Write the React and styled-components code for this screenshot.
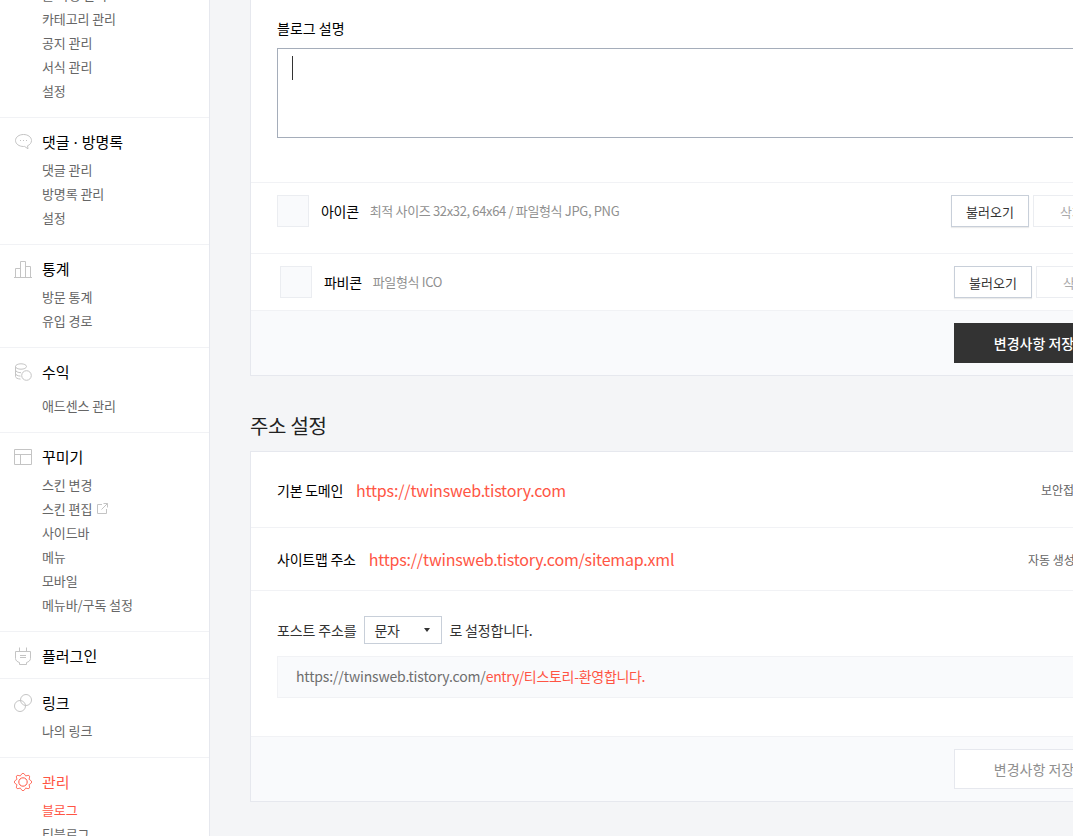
import React from 'react';
import styled, { createGlobalStyle } from 'styled-components';

const GlobalStyle = createGlobalStyle`
  html, body {
    margin: 0;
    height: 100%;
    overflow: hidden;
    background: #f4f5f7;
  }
  body {
    font-family: "Noto Sans CJK KR", "Noto Sans", sans-serif;
    color: #333;
  }
  * { box-sizing: border-box; }
`;

const Shell = styled.div`
  display: flex;
  align-items: flex-start;
  width: 1073px;
  height: 836px;
  overflow: hidden;
`;

const Sidebar = styled.nav`
  flex: 0 0 210px;
  height: 836px;
  overflow: hidden;
  background: #fff;
  border-right: 1px solid #e6e8ee;
`;

const Section = styled.div`
  padding: 11px 0 ${p => (p.$noItems ? 11 : 15)}px;
  border-bottom: 1px solid #f1f2f5;
  &:first-child { margin-top: -33px; }
`;

const SectionTitle = styled.div`
  display: flex;
  align-items: center;
  height: 24px;
  padding-left: 14px;
  font-size: 15px;
  font-weight: 400;
  word-spacing: -1.5px;
  color: ${p => (p.$active ? '#ff5544' : '#000')};
  svg { flex: 0 0 18px; margin: 2px 10px 0 0; }
`;

const MenuList = styled.ul`
  list-style: none;
  margin: ${p => (p.$wide ? 10 : 4)}px 0 0;
  padding: 0 0 0 42px;
`;

const MenuItem = styled.li`
  display: flex;
  align-items: center;
  height: 24px;
  font-size: 13px;
  letter-spacing: -0.1px;
  color: ${p => (p.$active ? '#ff5544' : '#666')};
  svg { margin-left: 5px; }
`;

const Main = styled.main`
  flex: 0 0 880px;
  margin-left: 40px;
  margin-top: -21px;
`;

const Card = styled.section`
  background: #fff;
  border: 1px solid #e6e8ee;
  overflow: hidden;
`;

const DescBlock = styled.div`
  height: 203px;
  padding: 38px 26px 0;
  border-bottom: 1px solid #f1f2f5;
`;

const FieldLabel = styled.div`
  height: 21px;
  margin-bottom: 9px;
  font-size: 14px;
  line-height: 21px;
  color: #000;
`;

const TextBox = styled.div`
  position: relative;
  height: 90px;
  border: 1px solid #a5adba;
`;

const Caret = styled.span`
  position: absolute;
  left: 14px;
  top: 7px;
  width: 1px;
  height: 24px;
  background: #333;
`;

const FileRow = styled.div`
  display: flex;
  align-items: flex-start;
  height: ${p => p.$height}px;
  padding: 12px ${p => 44 - p.$indent}px 0 ${p => p.$indent}px;
  border-bottom: 1px solid #f1f2f5;
`;

const Swatch = styled.div`
  flex: 0 0 32px;
  height: 32px;
  margin-right: 12px;
  background: #f9fafc;
  border: 1px solid #ebedf1;
`;

const FileName = styled.span`
  line-height: 32px;
  margin-right: 11px;
  font-size: 14px;
  letter-spacing: -0.3px;
  color: #000;
`;

const FileHint = styled.span`
  flex: 1;
  line-height: 32px;
  font-size: 13px;
  letter-spacing: -0.35px;
  color: #909090;
`;

const GhostButton = styled.button`
  flex: 0 0 78px;
  height: 32px;
  margin-left: 4px;
  padding: 0;
  background: #fff;
  border: 1px solid ${p => (p.$faded ? '#ebedf1' : '#c8cfd9')};
  box-shadow: ${p => (p.$faded ? 'none' : '0 1px 1px rgba(0, 0, 0, 0.08)')};
  font: inherit;
  font-size: 13px;
  color: ${p => (p.$faded ? '#aaa' : '#333')};
`;

const CardFooter = styled.div`
  display: flex;
  justify-content: flex-end;
  height: ${p => p.$height}px;
  padding: 12px 15px 0 0;
  background: #f9fafc;
`;

const SaveButton = styled.button`
  width: 160px;
  height: 40px;
  padding: 0;
  background: ${p => (p.$off ? '#fff' : '#333')};
  border: ${p => (p.$off ? '1px solid #e6e8ee' : 'none')};
  font: inherit;
  font-size: 14px;
  font-weight: ${p => (p.$off ? 400 : 500)};
  color: ${p => (p.$off ? '#909090' : '#fff')};
`;

const Heading = styled.h2`
  margin: 37px 0 12px;
  height: 26px;
  font-size: 20px;
  letter-spacing: -0.3px;
  font-weight: 400;
  line-height: 26px;
  color: #222;
`;

const UrlRow = styled.div`
  display: flex;
  align-items: center;
  height: ${p => p.$height}px;
  padding: 0 26px;
  border-bottom: 1px solid #f1f2f5;
`;

const UrlLabel = styled.span`
  font-size: 14px;
  letter-spacing: -0.25px;
  color: #000;
  margin-right: 13px;
`;

const UrlValue = styled.span`
  flex: 1;
  font-size: 16px;
  letter-spacing: -0.2px;
  color: #ff5544;
`;

const UrlNote = styled.span`
  width: ${p => p.$width}px;
  white-space: nowrap;
  font-size: 12px;
  color: #666;
`;

const PostBlock = styled.div`
  height: 146px;
  padding: 25px 26px 0;
  border-bottom: 1px solid #f1f2f5;
`;

const PostLine = styled.div`
  display: flex;
  align-items: center;
  height: 28px;
  font-size: 14px;
  letter-spacing: -0.15px;
  color: #333;
`;

const SelectBox = styled.div`
  display: flex;
  align-items: center;
  justify-content: space-between;
  width: 78px;
  height: 28px;
  margin: 0 7px 0 8px;
  padding: 0 11px 0 9px;
  background: #fff;
  border: 1px solid #c8cfd9;
  color: #333;
`;

const SelectArrow = styled.i`
  width: 0;
  height: 0;
  border-left: 3.5px solid transparent;
  border-right: 3.5px solid transparent;
  border-top: 4px solid #333;
`;

const UrlPreview = styled.div`
  height: 42px;
  margin-top: 12px;
  padding-left: 18px;
  background: #f9fafc;
  border: 1px solid #f1f2f5;
  font-size: 14px;
  letter-spacing: -0.15px;
  line-height: 38px;
  color: #6e6e6e;
  span { color: #ff5544; letter-spacing: -0.3px; }
`;

const Stroke = ({ children, color = '#c4c4c4' }) => (
  <svg width="18" height="18" viewBox="0 0 18 18" fill="none" stroke={color} strokeWidth="1">
    {children}
  </svg>
);

const ChatIcon = () => (
  <Stroke>
    <path d="M9.5 1.5c4.4 0 8 2.6 8 6 0 2.4-1.6 4.3-4 5.3l.5 3-3.5-2.4c-.3 0-.7.1-1 .1-4.4 0-8-2.6-8-6 0-3.4 3.6-6 8-6z" />
    <path d="M6 7.5h1M9 7.5h1M12 7.500h1" />
  </Stroke>
);

const BarsIcon = () => (
  <Stroke>
    <path d="M0 17.5h18M1.5 17.5v-9h5v9M6.5 17.5v-16h5v16M11.500 17.5v-11h5v11" />
  </Stroke>
);

const CoinsIcon = () => (
  <Stroke>
    <ellipse cx="7" cy="3.5" rx="5.5" ry="2.7" />
    <path d="M1.5 3.5v10c0 1.3 2 2.4 5 2.6M1.5 7c0 1.5 2.5 2.7 5.5 2.7M1.5 10.4c0 1.5 2.3 2.6 5 2.7" />
    <circle cx="12.5" cy="12.5" r="4.8" fill="#fff" />
  </Stroke>
);

const LayoutIcon = () => (
  <Stroke>
    <path d="M.5 1.5h17v15H.5zM.5 6.5h17M6.5 6.5v10" />
  </Stroke>
);

const PlugIcon = () => (
  <Stroke>
    <path d="M5.5.5v4M12.5.5v4M1.500 4.500h15v7c0 2-2 3.500-4 4v2h-7v-2c-2-.5-4-2-4-4z" />
    <path d="M6 8.5h6M6 10.5h6" />
  </Stroke>
);

const LinkIcon = () => (
  <Stroke>
    <circle cx="6" cy="12" r="5.5" />
    <circle cx="12" cy="6" r="5.5" />
  </Stroke>
);

// scalloped ring, eight teeth
const gearPath = Array.from({ length: 64 }, (_, k) => {
  const a = (k / 64) * Math.PI * 2;
  const r = 7.8 + 1 * Math.cos(8 * a);
  return `${k ? 'L' : 'M'}${(9 + r * Math.cos(a)).toFixed(2)} ${(9 + r * Math.sin(a)).toFixed(2)}`;
}).join('') + 'z';

const GearIcon = () => (
  <Stroke color="#ff5544">
    <circle cx="9" cy="9" r="4.2" />
    <path d={gearPath} />
  </Stroke>
);

const ExternalIcon = () => (
  <svg width="11" height="11" viewBox="0 0 11 11" fill="none" stroke="#c4c4c4" strokeWidth="1">
    <path d="M5 1.5H.5v9h9V6M6.5.5h4v4M10.5.5l-6 6" />
  </svg>
);

const menu = [
  { items: ['글 작성 관리', '카테고리 관리', '공지 관리', '서식 관리', '설정'] },
  { title: '댓글 · 방명록', icon: <ChatIcon />, items: ['댓글 관리', '방명록 관리', '설정'] },
  { title: '통계', icon: <BarsIcon />, items: ['방문 통계', '유입 경로'] },
  { title: '수익', icon: <CoinsIcon />, items: ['애드센스 관리'], wide: true },
  { title: '꾸미기', icon: <LayoutIcon />, items: ['스킨 변경', '스킨 편집', '사이드바', '메뉴', '모바일', '메뉴바/구독 설정'] },
  { title: '플러그인', icon: <PlugIcon />, items: [] },
  { title: '링크', icon: <LinkIcon />, items: ['나의 링크'] },
  { title: '관리', icon: <GearIcon />, items: ['블로그', '티블로그'], active: true },
];

const SideMenu = () => (
  <Sidebar>
    {menu.map((group, i) => (
      <Section key={i} $noItems={group.items.length === 0}>
        {group.title && (
          <SectionTitle $active={group.active}>
            {group.icon}
            {group.title}
          </SectionTitle>
        )}
        {group.items.length > 0 && (
          <MenuList $wide={group.wide}>
            {group.items.map((item, j) => (
              <MenuItem key={item} $active={group.active && j === 0}>
                {item}
                {item === '스킨 편집' && <ExternalIcon />}
              </MenuItem>
            ))}
          </MenuList>
        )}
      </Section>
    ))}
  </Sidebar>
);

const App = () => (
  <Shell>
    <GlobalStyle />
    <SideMenu />
    <Main>
      <Card>
        <DescBlock>
          <FieldLabel>블로그 설명</FieldLabel>
          <TextBox><Caret /></TextBox>
        </DescBlock>
        <FileRow $height={71} $indent={26}>
          <Swatch />
          <FileName>아이콘</FileName>
          <FileHint>최적 사이즈 32x32, 64x64 / 파일형식 JPG, PNG</FileHint>
          <GhostButton>불러오기</GhostButton>
          <GhostButton $faded>삭제</GhostButton>
        </FileRow>
        <FileRow $height={57} $indent={29}>
          <Swatch />
          <FileName>파비콘</FileName>
          <FileHint>파일형식 ICO</FileHint>
          <GhostButton>불러오기</GhostButton>
          <GhostButton $faded>삭제</GhostButton>
        </FileRow>
        <CardFooter $height={64}>
          <SaveButton>변경사항 저장</SaveButton>
        </CardFooter>
      </Card>
      <Heading>주소 설정</Heading>
      <Card>
        <UrlRow $height={76}>
          <UrlLabel>기본 도메인</UrlLabel>
          <UrlValue>https://twinsweb.tistory.com</UrlValue>
          <UrlNote $width={62}>보안접속</UrlNote>
        </UrlRow>
        <UrlRow $height={63}>
          <UrlLabel>사이트맵 주소</UrlLabel>
          <UrlValue>https://twinsweb.tistory.com/sitemap.xml</UrlValue>
          <UrlNote $width={75}>자동 생성</UrlNote>
        </UrlRow>
        <PostBlock>
          <PostLine>
            포스트 주소를
            <SelectBox>문자<SelectArrow /></SelectBox>
            로 설정합니다.
          </PostLine>
          <UrlPreview>https://twinsweb.tistory.com/<span>entry/티스토리-환영합니다.</span></UrlPreview>
        </PostBlock>
        <CardFooter $height={64}>
          <SaveButton $off>변경사항 저장</SaveButton>
        </CardFooter>
      </Card>
    </Main>
  </Shell>
);

export default App;
